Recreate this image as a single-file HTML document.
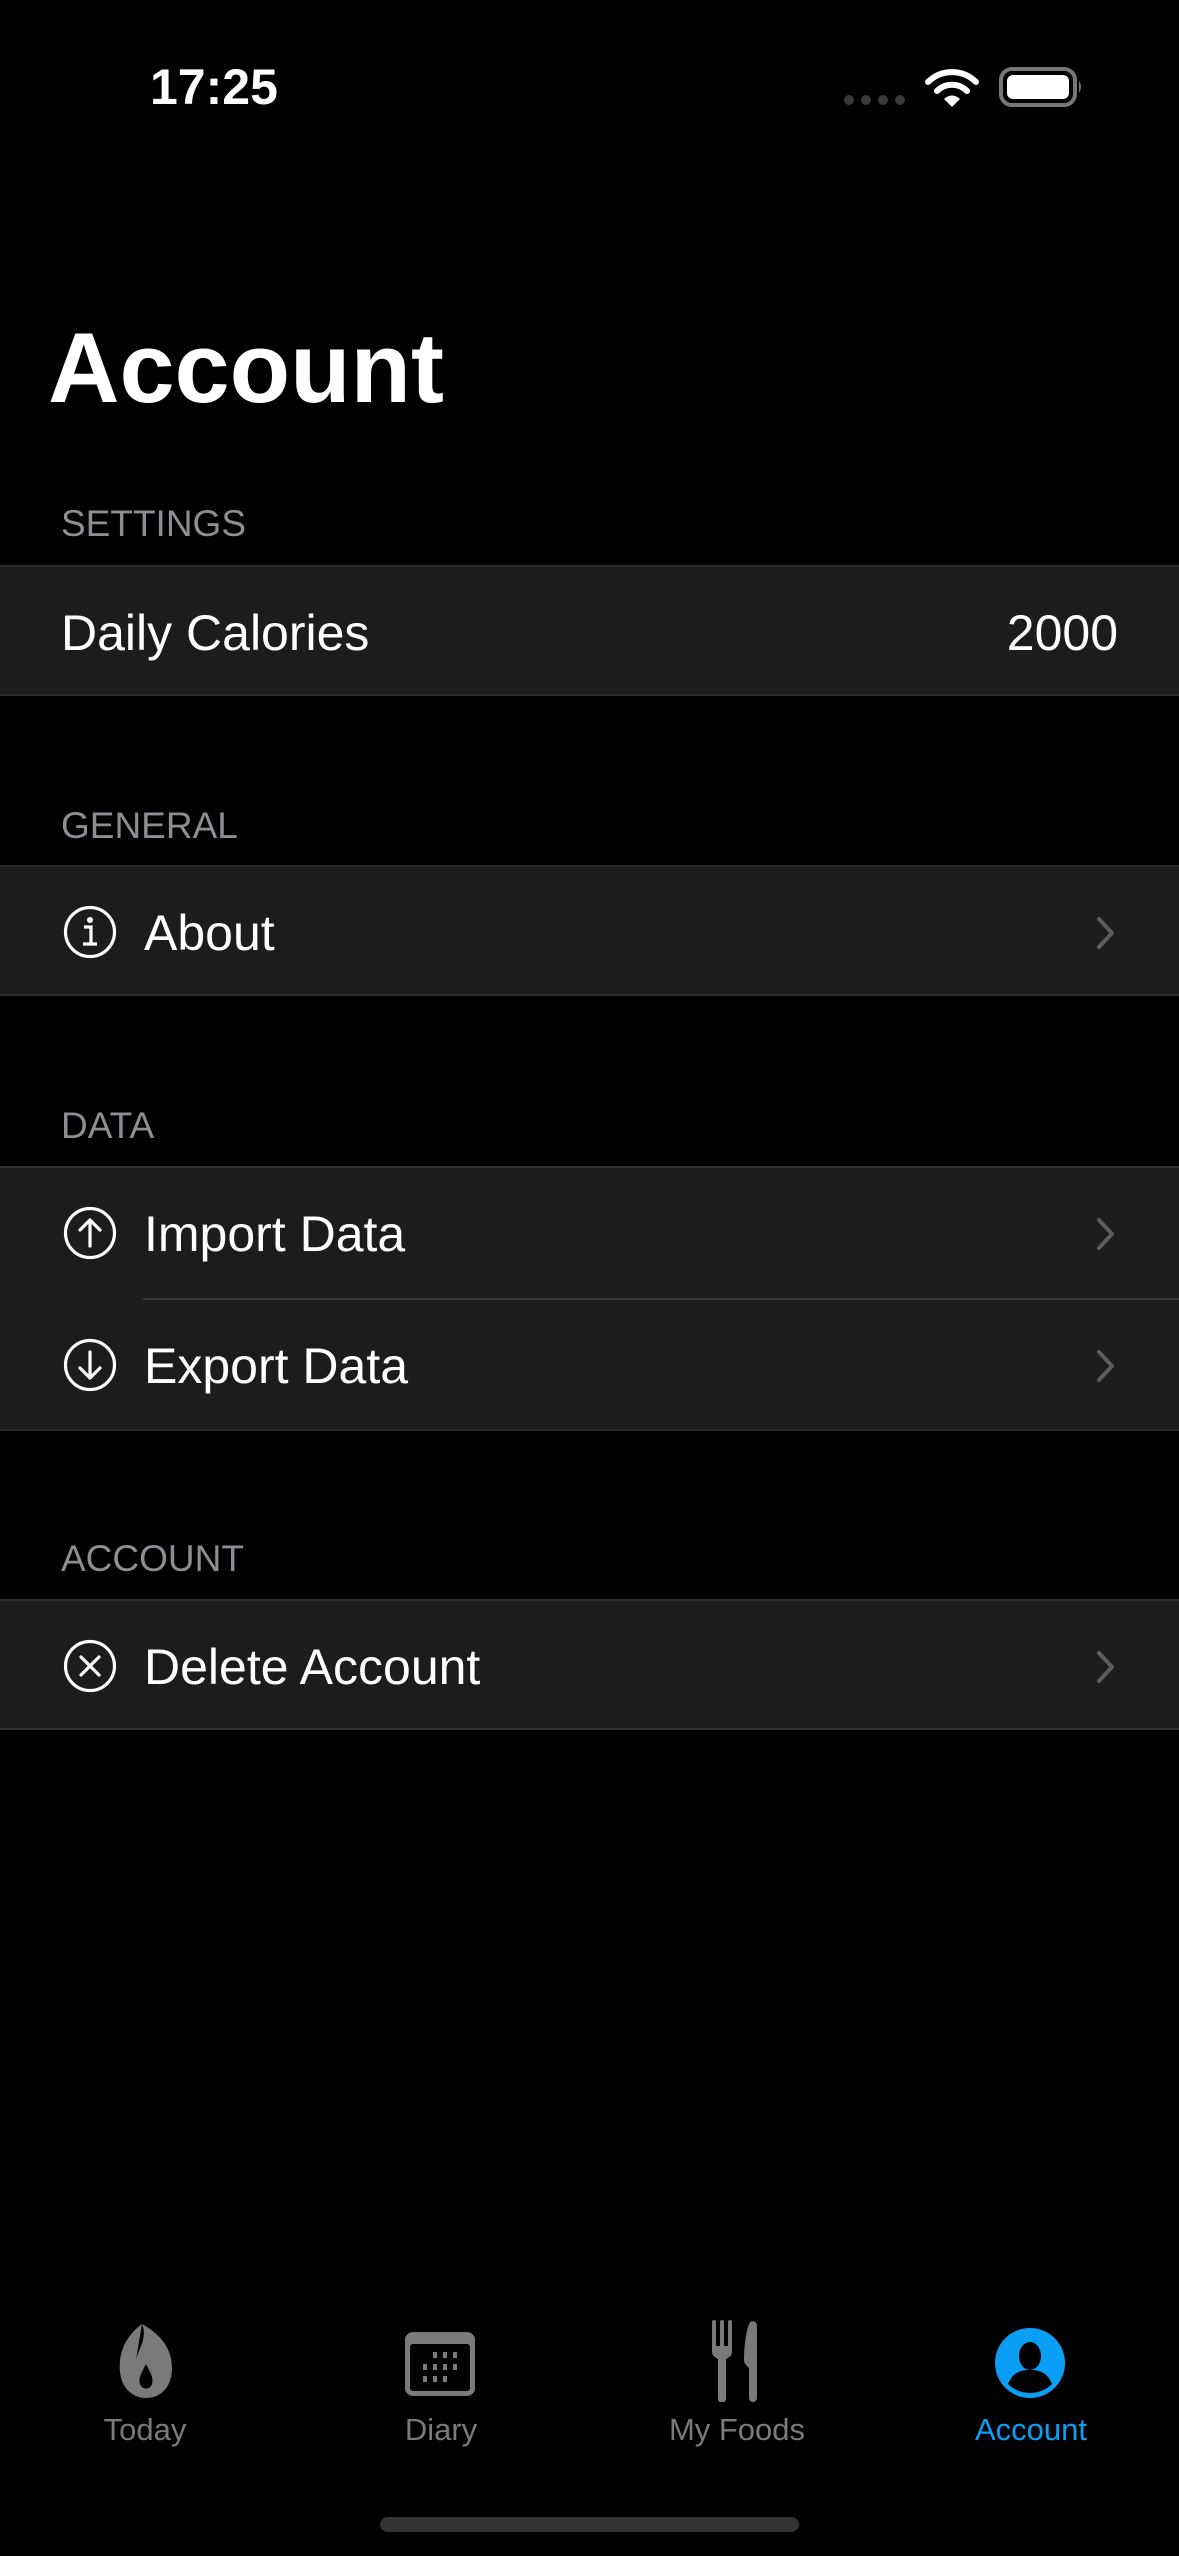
<!DOCTYPE html>
<html><head><meta charset="utf-8"><style>
*{margin:0;padding:0;box-sizing:border-box}
body{width:1179px;height:2556px;background:#000;color:#fff;font-family:"Liberation Sans",sans-serif;position:relative;overflow:hidden}
.a{position:absolute}
.hdr{position:absolute;left:61px;font-size:37px;color:#8d8d93}
.row{position:absolute;left:0;width:1179px;height:131px;background:#1c1c1e;border-top:2px solid #2c2c2e;border-bottom:2px solid #2c2c2e}
.lbl{position:absolute;top:3px;line-height:127px;font-size:50px}
.ic{position:absolute;left:63px;top:38px}
.chev{position:absolute;left:1094px;top:48px}
.tl{position:absolute;top:2412px;font-size:31px;color:#7a7a7a;text-align:center;width:240px}
</style></head><body>
<div class="a" style="left:150px;top:58px;font-size:50px;font-weight:bold">17:25</div>
<svg class="a" style="left:840px;top:90px" width="66" height="20"><g fill="#3a3a3a"><circle cx="9" cy="10" r="5"/><circle cx="26" cy="10" r="5"/><circle cx="43" cy="10" r="5"/><circle cx="60" cy="10" r="5"/></g></svg>
<svg class="a" style="left:924px;top:68px" width="56" height="40" viewBox="0 0 56 40"><g fill="none" stroke="#fff" stroke-width="6" stroke-linecap="round"><path d="M4 14 A34 34 0 0 1 52 14"/><path d="M13 23 A21 21 0 0 1 43 23"/></g><path d="M20 31 L28 39 L36 31 A11 11 0 0 0 20 31Z" fill="#fff"/></svg>
<svg class="a" style="left:998px;top:66px" width="86" height="42"><rect x="3" y="3" width="74" height="36" rx="11" fill="none" stroke="#777" stroke-width="4"/><rect x="9" y="9" width="62" height="24" rx="6" fill="#fff"/><path d="M81 15 Q85 21 81 27Z" fill="#777"/></svg>

<div class="a" style="left:48px;top:308px;font-size:99px;font-weight:bold;line-height:120px">Account</div>

<div class="hdr" style="top:503px">SETTINGS</div>
<div class="row" style="top:565px"><div class="lbl" style="left:61px">Daily Calories</div><div class="lbl" style="right:61px">2000</div></div>

<div class="hdr" style="top:805px">GENERAL</div>
<div class="row" style="top:865px">
<svg class="ic" width="54" height="54"><circle cx="27" cy="27" r="24.5" fill="none" stroke="#fff" stroke-width="3.2"/><circle cx="27" cy="15" r="3" fill="#fff"/><path d="M21 22h7v17M20 39h14" fill="none" stroke="#fff" stroke-width="3.2"/></svg>
<div class="lbl" style="left:144px">About</div>
<svg class="chev" width="24" height="36"><path d="M5 4 L18 18 L5 32" fill="none" stroke="#5c5c60" stroke-width="4" stroke-linecap="round" stroke-linejoin="round"/></svg></div>

<div class="hdr" style="top:1105px">DATA</div>
<div class="row" style="top:1166px;height:265px">
<svg class="ic" width="54" height="54"><circle cx="27" cy="27" r="24.5" fill="none" stroke="#fff" stroke-width="3.2"/><path d="M27 40V14M17 24l10-10 10 10" fill="none" stroke="#fff" stroke-width="3.2" stroke-linecap="round" stroke-linejoin="round"/></svg>
<div class="lbl" style="left:144px">Import Data</div>
<svg class="chev" width="24" height="36"><path d="M5 4 L18 18 L5 32" fill="none" stroke="#5c5c60" stroke-width="4" stroke-linecap="round" stroke-linejoin="round"/></svg>
<div class="a" style="left:143px;top:130px;width:1036px;height:2px;background:#38383a"></div>
<svg class="ic" style="top:170px" width="54" height="54"><circle cx="27" cy="27" r="24.5" fill="none" stroke="#fff" stroke-width="3.2"/><path d="M27 14V40M17 30l10 10 10-10" fill="none" stroke="#fff" stroke-width="3.2" stroke-linecap="round" stroke-linejoin="round"/></svg>
<div class="lbl" style="left:144px;top:135px">Export Data</div>
<svg class="chev" style="top:180px" width="24" height="36"><path d="M5 4 L18 18 L5 32" fill="none" stroke="#5c5c60" stroke-width="4" stroke-linecap="round" stroke-linejoin="round"/></svg></div>

<div class="hdr" style="top:1538px">ACCOUNT</div>
<div class="row" style="top:1599px">
<svg class="ic" width="54" height="54"><circle cx="27" cy="27" r="24.5" fill="none" stroke="#fff" stroke-width="3.2"/><path d="M18 18l18 18M36 18L18 36" fill="none" stroke="#fff" stroke-width="3.2" stroke-linecap="round"/></svg>
<div class="lbl" style="left:144px">Delete Account</div>
<svg class="chev" width="24" height="36"><path d="M5 4 L18 18 L5 32" fill="none" stroke="#5c5c60" stroke-width="4" stroke-linecap="round" stroke-linejoin="round"/></svg></div>

<svg class="a" style="left:116px;top:2322px" width="60" height="78" viewBox="0 0 60 78"><path d="M26 2 C10 14 2 30 4 50 C6 68 18 76 30 76 C44 76 56 66 56 46 C56 26 44 12 26 2 C32 16 22 28 20 38 Z" fill="#7a7a7a"/><path d="M30 42 C26 50 22 56 24 62 C26 68 34 68 36 62 C38 56 34 50 30 42Z" fill="#000"/></svg>
<svg class="a" style="left:405px;top:2332px" width="70" height="64" viewBox="0 0 70 64"><rect x="0" y="0" width="70" height="64" rx="8" fill="#7a7a7a"/><rect x="5" y="12" width="60" height="47" rx="3" fill="#000"/><g fill="#7a7a7a"><rect x="28" y="20" width="4" height="6"/><rect x="38" y="20" width="4" height="6"/><rect x="48" y="20" width="4" height="6"/><rect x="18" y="32" width="4" height="6"/><rect x="28" y="32" width="4" height="6"/><rect x="38" y="32" width="4" height="6"/><rect x="48" y="32" width="4" height="6"/><rect x="18" y="44" width="4" height="6"/><rect x="28" y="44" width="4" height="6"/><rect x="38" y="44" width="4" height="6"/></g></svg>
<svg class="a" style="left:710px;top:2320px" width="50" height="82" viewBox="0 0 50 82"><g fill="#7a7a7a"><rect x="2" y="0" width="4" height="30" rx="2"/><rect x="10" y="0" width="4" height="30" rx="2"/><rect x="18" y="0" width="4" height="30" rx="2"/><path d="M2 26h20v6c0 4-4 6-6 7v40a4 4 0 0 1-8 0V39c-2-1-6-3-6-7Z"/><path d="M40 2c4-2 7 0 7 4v72a4 4 0 0 1-8 0V48c-2-2-5-4-5-8c0-14 2-30 6-38Z"/></g></svg>
<svg class="a" style="left:995px;top:2328px" width="70" height="70" viewBox="0 0 70 70"><circle cx="35" cy="35" r="35" fill="#0a9ff5"/><ellipse cx="35" cy="28" rx="11" ry="14" fill="#000"/><path d="M13 56 C18 44 26 42 35 42 C44 42 52 44 57 56 C51 62 43 65 35 65 C27 65 19 62 13 56Z" fill="#000"/></svg>
<div class="tl" style="left:25px">Today</div>
<div class="tl" style="left:321px">Diary</div>
<div class="tl" style="left:617px">My Foods</div>
<div class="tl" style="left:911px;color:#0a9ff5">Account</div>
<div class="a" style="left:380px;top:2517px;width:419px;height:15px;border-radius:8px;background:#333"></div>
</body></html>
